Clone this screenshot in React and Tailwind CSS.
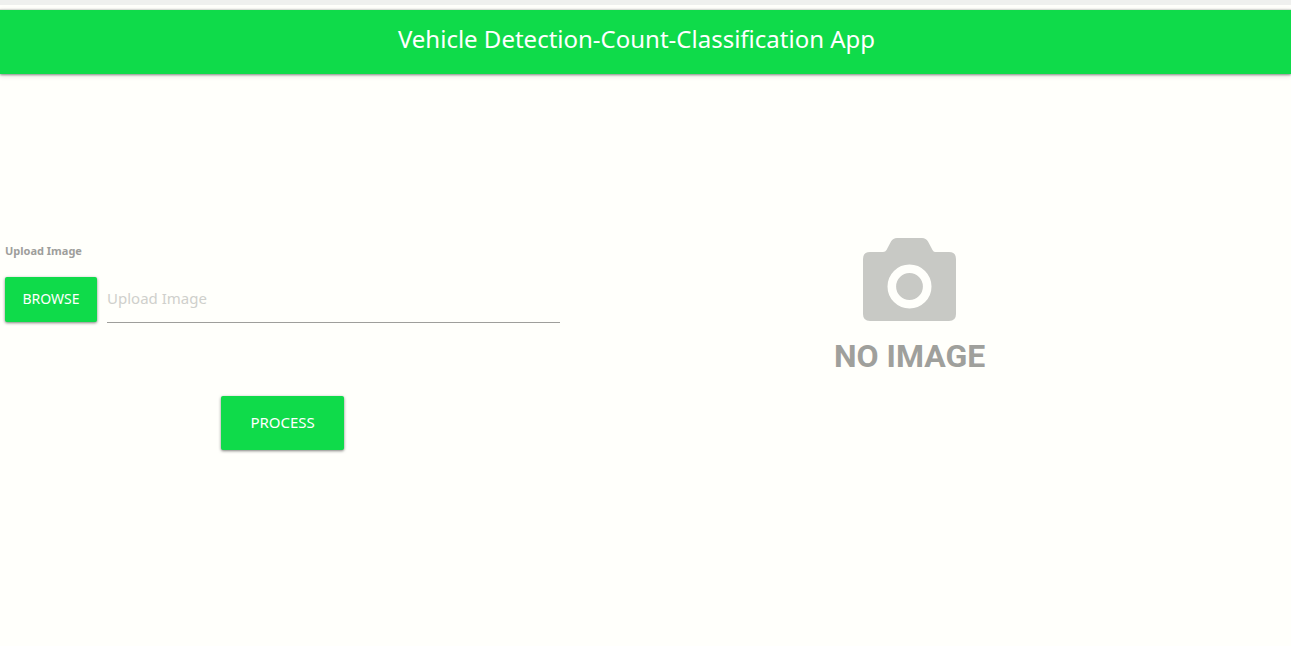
import { useRef, useState } from "react";

function CameraPlaceholder() {
  return (
    <figure className="flex flex-col items-center">
      <svg width="93" height="84" viewBox="0 0 93 84" aria-hidden="true">
        <path
          fill="#c8c9c5"
          d="M7 14H20Q22.500 14 23.500 12L28 3.500Q30 0 34 0H59Q63 0 65 3.500L69.500 12Q70.500 14 72 14H86Q93 14 93 21V76Q93 83 86 83H7Q0 83 0 76V21Q0 14 7 14Z"
        />
        <circle cx="46.500" cy="48.500" r="17.700" fill="#c8c9c5" stroke="#fffffb" strokeWidth="8.600" />
      </svg>
      <figcaption className="mt-4 font-['Roboto','Liberation_Sans',sans-serif] text-[32px] leading-9 font-bold whitespace-nowrap text-[#9fa09c]">
        NO IMAGE
      </figcaption>
    </figure>
  );
}

export default function App() {
  const picker = useRef(null);
  const [fileName, setFileName] = useState("");

  return (
    <div className="min-h-screen bg-[#fffffb] font-['Noto_Sans','Open_Sans',sans-serif]">
      <div className="h-[5px] bg-[#eff0ee]" />
      <header className="mt-1 flex h-[65px] items-center justify-center border-t border-[#d8dad6] bg-[#0fdb4a] pr-[18px] pb-1.5 shadow-[0_1px_2px_rgba(0,0,0,0.4),0_2px_5px_rgba(0,0,0,0.12)]">
        <h1 className="text-[24px] leading-9 text-white">Vehicle Detection-Count-Classification App</h1>
      </header>

      <main className="flex pt-40">
        <form className="w-[43.4%] pl-[5px]" onSubmit={(e) => e.preventDefault()}>
          <label htmlFor="file-name" className="mt-2 block text-[11px] leading-[18px] font-bold text-[#9e9e9b]">
            Upload Image
          </label>
          <div className="mt-[17px] flex items-start gap-[10px]">
            <button
              type="button"
              onClick={() => picker.current.click()}
              className="flex h-[45px] w-[92px] shrink-0 items-center justify-center rounded-xs bg-[#0fdb4a] pb-0.5 text-[14px] text-white uppercase shadow-[0_1px_3px_rgba(0,0,0,0.5)]"
            >
              Browse
            </button>
            <input
              ref={picker}
              type="file"
              accept="image/*"
              aria-label="Image file"
              className="hidden"
              onChange={(e) => setFileName(e.target.files[0]?.name ?? "")}
            />
            <input
              id="file-name"
              type="text"
              readOnly
              value={fileName}
              placeholder="Upload Image"
              className="h-[46px] min-w-0 flex-1 border-b border-[#9e9e9b] pb-1 text-[15px] text-[#333333] outline-none placeholder:text-[#cfd0cc]"
            />
          </div>
          <div className="mt-[73px] flex justify-center">
            <button
              type="submit"
              className="h-[54px] w-[123px] rounded-xs bg-[#0fdb4a] pb-0.5 text-[15px] text-white uppercase shadow-[0_1px_3px_rgba(0,0,0,0.5)]"
            >
              Process
            </button>
          </div>
        </form>

        <section className="flex flex-1 justify-center pt-1 pr-8">
          <CameraPlaceholder />
        </section>
      </main>
    </div>
  );
}
